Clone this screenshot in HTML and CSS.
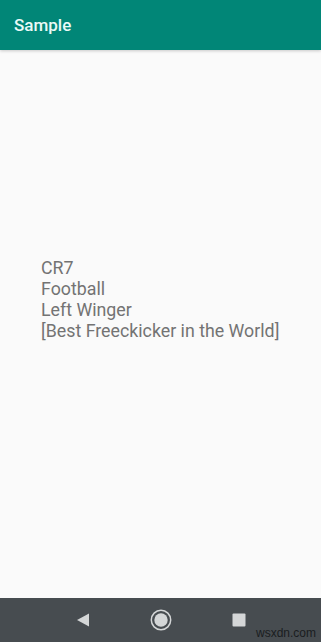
FILE: index.html
```html
<!DOCTYPE html>
<html lang="en">
<head>
    <meta charset="UTF-8">
    <meta name="viewport" content="width=device-width, initial-scale=1.0">
    <title>Sample</title>
    <link rel="stylesheet" href="styles.css">
</head>
<body>
    <div class="app">
        <div class="toolbar">Sample</div>

        <div class="content">
            <div class="info">
                <div>CR7</div>
                <div>Football</div>
                <div>Left Winger</div>
                <div>[Best Freeckicker in the World]</div>
            </div>
        </div>

        <div class="navbar">
            <svg class="nav-icon" width="16" height="16" viewBox="0 0 16 16">
                <polygon points="14,1.5 14,14.5 2,8" fill="#d4d6d7"/>
            </svg>
            <svg class="nav-icon" width="22" height="22" viewBox="0 0 22 22">
                <circle cx="11" cy="11" r="9.7" fill="none" stroke="#d4d6d7" stroke-width="1.5"/>
                <circle cx="11" cy="11" r="6.7" fill="#d4d6d7"/>
            </svg>
            <svg class="nav-icon" width="16" height="16" viewBox="0 0 16 16">
                <rect x="1.5" y="1.5" width="13" height="13" rx="1" fill="#d4d6d7"/>
            </svg>
            <span class="watermark">wsxdn.com</span>
        </div>
    </div>
</body>
</html>
```

FILE: styles.css
```css
body {
    margin: 0;
    padding: 0;
    font-family: Roboto, "Noto Sans", sans-serif;
    background-color: #fafafa;
}
.app {
    display: flex;
    flex-direction: column;
    height: 642px;
}
.toolbar {
    height: 50px;
    background-color: #018677;
    color: #eafaf7;
    font-size: 17px;
    font-weight: 500;
    padding-left: 14px;
    display: flex;
    align-items: center;
    box-shadow: 0 1px 3px rgba(0, 0, 0, 0.2);
}
.content {
    flex: 1;
    display: flex;
    align-items: center;
    padding-left: 41px;
}
.info {
    color: #737373;
    font-size: 17.8px;
    line-height: 21px;
    margin-top: -50px;
}
.navbar {
    height: 44px;
    background-color: #474c50;
    display: flex;
    align-items: center;
    justify-content: center;
    gap: 59px;
    position: relative;
}
.watermark {
    position: absolute;
    right: 5px;
    bottom: 2px;
    font-family: Arial, "Liberation Sans", sans-serif;
    font-size: 12px;
    color: #1a1d20;
}
```
